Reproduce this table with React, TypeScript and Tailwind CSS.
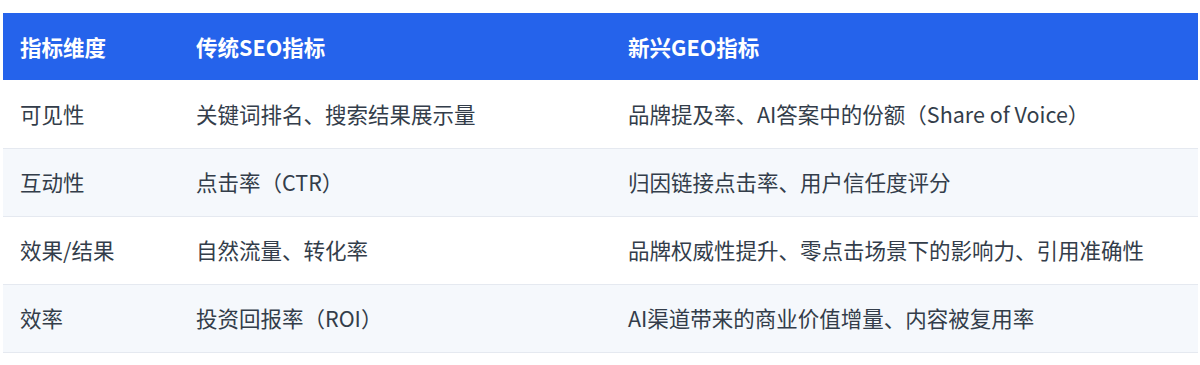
import React from "react";

const rows = [
  ["可见性", "关键词排名、搜索结果展示量", "品牌提及率、AI答案中的份额（Share of Voice）"],
  ["互动性", "点击率（CTR）", "归因链接点击率、用户信任度评分"],
  ["效果/结果", "自然流量、转化率", "品牌权威性提升、零点击场景下的影响力、引用准确性"],
  ["效率", "投资回报率（ROI）", "AI渠道带来的商业价值增量、内容被复用率"],
];

export default function App() {
  return (
    <div
      className="w-[1200px] h-[365px] bg-white pt-[13px] pl-[3px]"
      style={{ fontFamily: '"Noto Sans CJK SC", "Noto Sans", sans-serif' }}
    >
      <table className="w-[1195px] border-collapse table-fixed text-[21.5px]">
        <colgroup>
          <col className="w-[176px]" />
          <col className="w-[432px]" />
          <col />
        </colgroup>
        <thead>
          <tr className="bg-[#2563eb] h-[67px]">
            <th className="text-left font-bold text-white pl-[17px] py-0 leading-[28px]">指标维度</th>
            <th className="text-left font-bold text-white pl-[17px] py-0 leading-[28px]">传统SEO指标</th>
            <th className="text-left font-bold text-white pl-[17px] py-0 leading-[28px]">新兴GEO指标</th>
          </tr>
        </thead>
        <tbody>
          {rows.map((r, i) => (
            <tr
              key={i}
              className={`h-[68px] border-b border-[#e5e9f0] ${i % 2 === 1 ? "bg-[#f5f8fc]" : "bg-white"}`}
            >
              {r.map((c, j) => (
                <td key={j} className="pl-[17px] py-0 text-[#333d4a] leading-[28px]">
                  {c}
                </td>
              ))}
            </tr>
          ))}
        </tbody>
      </table>
    </div>
  );
}
